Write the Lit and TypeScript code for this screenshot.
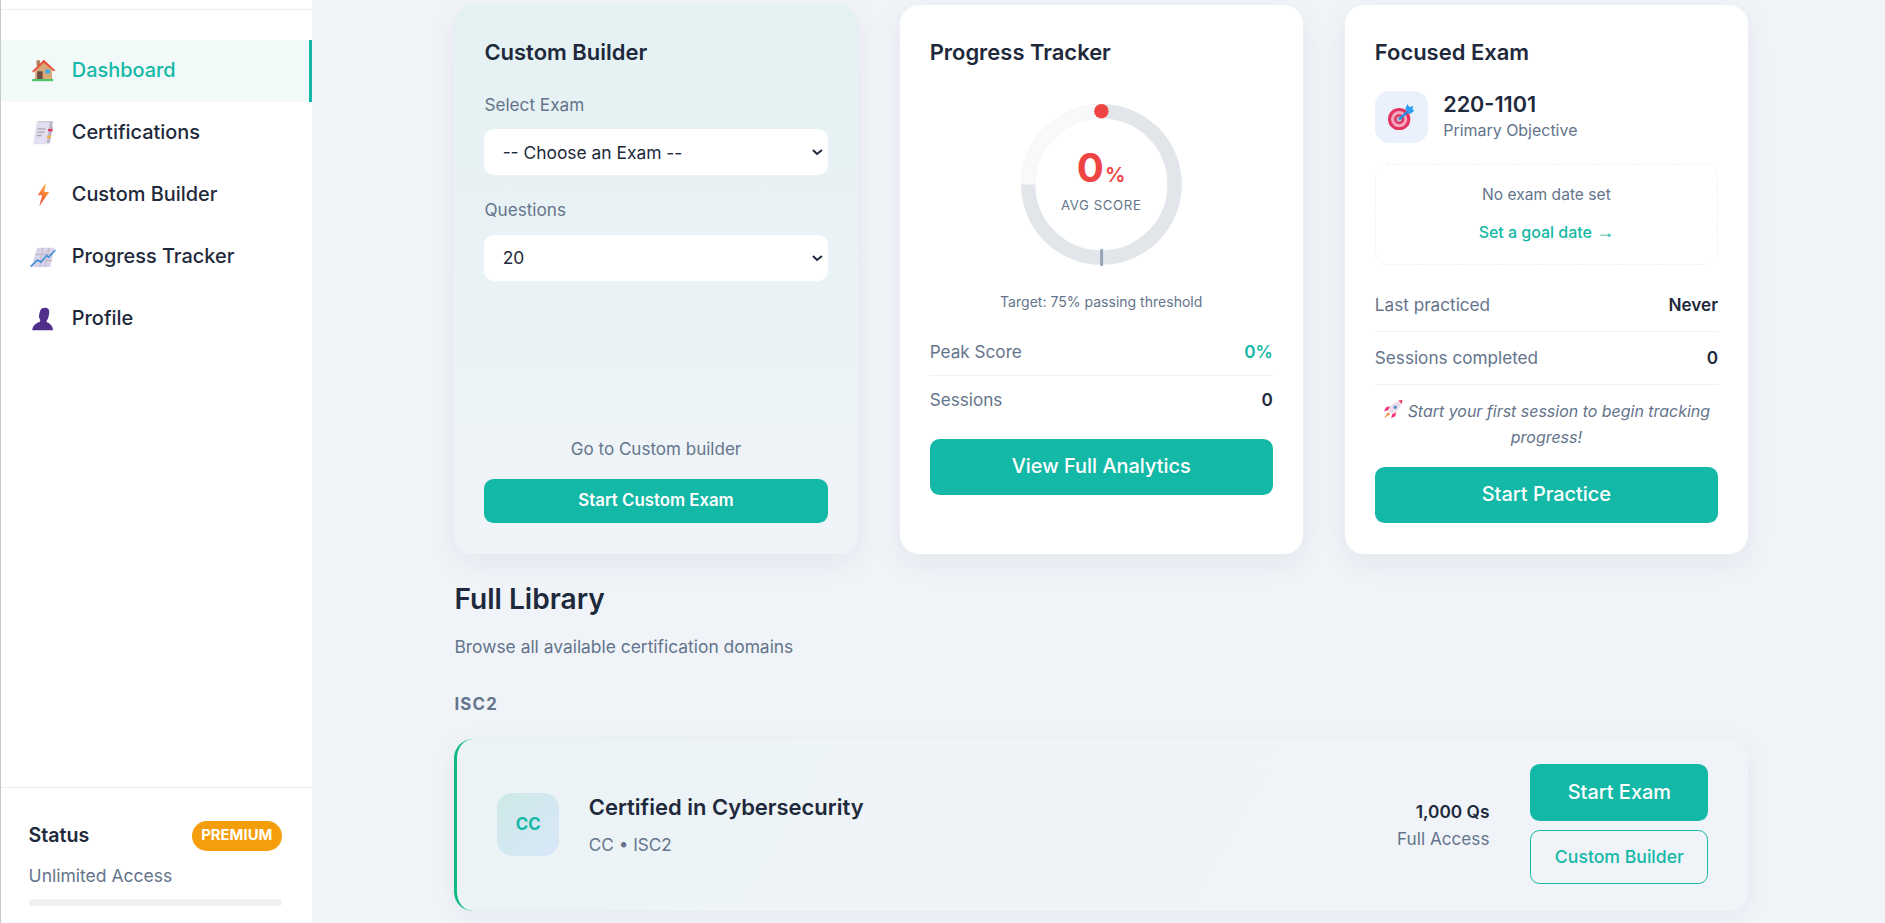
import { LitElement, html, css, svg } from "lit";
import { customElement } from "lit/decorators.js";

const icons = {
  house: svg`<svg class="ico" viewBox="0 0 24 24"><rect x="2" y="20" width="19" height="2" fill="#4cc46a"/><rect x="6" y="3" width="3" height="5" fill="#b07a52"/><path d="M5 11.5 12.5 4 20 11.5V20H4.500z" fill="#dba878"/><path d="M6.500 13h5v7h-5z" fill="#6d4c41"/><rect x="14" y="11.500" width="4" height="3.500" fill="#35aef0"/><path d="M2 13 12.500 2.500 23 12l-1.200 1.200-9.300-8-9.300 8.800z" fill="#e8503a"/></svg>`,
  doc: svg`<svg class="ico" viewBox="0 0 24 24"><path d="M7 2h14l-1 4 1 1-3 15H4z" fill="#bdb8c8"/><path d="M6 3h12l-3 20H3z" fill="#e3dff0"/><path d="M7 9h7M6.500 12h6.500M6 15h4.500" stroke="#aaa6b6" stroke-width="1.200"/><rect x="16.500" y="9" width="4" height="2.200" fill="#e0355f"/><rect x="15.500" y="15" width="3.500" height="2.200" fill="#f0b63c"/></svg>`,
  bolt: svg`<svg class="ico" viewBox="0 0 24 24"><defs><linearGradient id="b" x1=".7" y1="0" x2=".3" y2="1"><stop offset="0" stop-color="#fdb03c"/><stop offset="1" stop-color="#ef4d3e"/></linearGradient></defs><path d="M14.500 1.500 7 13h4L8.500 23 17.500 10H13z" fill="url(#b)"/></svg>`,
  chart: svg`<svg class="ico" viewBox="0 0 24 24"><path d="M6.500 3.500H22L18.500 21H1.500z" fill="#d8d3e6"/><path d="M11.500 3.500 9 21M17 3.500 14 21M5 9.500h16M3.500 15h16.500" stroke="#b8b2ca" stroke-width=".8"/><path d="M.5 20.500 7 14.500l3 2 5-6 2 1.500 6-6.500" fill="none" stroke="#3e92dc" stroke-width="1.500"/></svg>`,
  person: svg`<svg class="ico" viewBox="0 0 24 24"><path d="M11 2c4-1.500 7 .5 6.500 4-.2 2-.5 4-1.500 6-.5 1-1 1.500-1 2.500 3.500 1 5.500 3.500 6 7.500H2c.5-4 3-6.500 6.500-7.500 1-.3 1-1.500.5-2.500-1-1.500-1-3-.5-5C9 5 9.500 2.800 11 2z" fill="#4f2e8c"/></svg>`,
  target: svg`<svg class="tgt" viewBox="0 0 26 26"><circle cx="11" cy="15" r="11" fill="#e5325f"/><circle cx="11" cy="15" r="8" fill="#f3a6c0"/><circle cx="11" cy="15" r="5" fill="#e5325f"/><circle cx="11" cy="15" r="2.600" fill="#b9b5c6"/><path d="M11 15 20 7" stroke="#1f8fe0" stroke-width="2.400"/><path d="M17 5l2-5 2 3 4-1-1 3 2 2-5 3z" fill="#2d9ff0"/></svg>`,
  rocket: svg`<svg class="rkt" viewBox="0 0 20 20"><path d="M5 11C8 5 13 2 19 1c-1 6-4 11-10 14z" fill="#ebdde8"/><path d="M15 1.500 19 1l-.5 4z" fill="#ef3e64"/><circle cx="12" cy="8" r="1.700" fill="#5f8fd8"/><path d="M5 11 1 12l2-4 4-1zM9 15l-1 4 4-2 1-4z" fill="#f3367a"/><path d="M5 13l2 2-6 4z" fill="#f58a3c"/></svg>`,
};

@customElement("app-root")
export class AppRoot extends LitElement {
  static styles = css`
    :host {
      display: flex;
      zoom: 1.2;
      width: 1570.8px;
      height: 769.1px;
      overflow: hidden;
      background: #f0f4f9;
      color: #1e293b;
      font-family: Inter, "Liberation Sans", sans-serif;
      font-size: 14.3px;
      line-height: 1.5;
    }
    * { box-sizing: border-box; }

    .side {
      width: 260px;
      flex: none;
      background: #fff;
      border-left: 1px solid #c9c9c9;
      display: flex;
      flex-direction: column;
    }
    .top-rule { height: 8px; border-bottom: 1px solid #eceef1; }
    .nav { display: flex; flex-direction: column; margin-top: 25px; flex: 1; }
    .nav-item {
      display: flex;
      align-items: center;
      gap: 13px;
      height: 51.7px;
      padding-left: 24px;
      font-size: 16.6px;
      font-weight: 450;
      color: #1e293b;
    }
    .nav-item.active {
      background: #f1faf8;
      color: #14b8a6;
      border-right: 2.5px solid #14b8a6;
    }
    .ico { width: 22px; height: 22px; flex: none; }

    .status { border-top: 1px solid #eceef1; padding: 27px 25px 15px 23px; height: 113px; }
    .status-head { display: flex; align-items: center; justify-content: space-between; }
    .status-name { font-size: 16.3px; font-weight: 600; }
    .badge {
      background: #f59e0b;
      color: #fff;
      font-size: 12.4px;
      font-weight: 700;
      padding: 3.500px 8px;
      border-radius: 999px;
      line-height: 18px;
    }
    .status-sub { color: #64748b; font-size: 14.6px; margin-top: 10px; }
    .bar { height: 6px; border-radius: 3px; background: #eef0f2; margin-top: 8px; }

    .main { flex: 1; padding: 4px 0 0 118.700px; min-width: 0; }
    .wrap { width: 1078px; }
    .grid {
      display: grid;
      grid-template-columns: repeat(3, 336px);
      column-gap: 35px;
      height: 456px;
    }
    .card {
      background: #fff;
      border-radius: 16px;
      padding: 26px 25px 26px;
      box-shadow: 0 8px 24px rgba(30, 41, 59, 0.06);
      display: flex;
      flex-direction: column;
    }
    .card.tint { background: linear-gradient(180deg, #e4f1f2 0%, #f0f4f9 100%); }
    h3 { margin: 0 0 19.500px; font-size: 18.3px; font-weight: 600; line-height: 27px; }
    .lbl { color: #64748b; font-size: 14.300px; line-height: 21px; margin-bottom: 10px; }
    select {
      width: 100%;
      height: 38.500px;
      border: 1px solid #fff;
      border-radius: 8px;
      background: #fff;
      color: #1e293b;
      font: 400 14.500px Inter, sans-serif;
      padding: 0 11px;
      margin-bottom: 18.500px;
    }
    .go { margin-top: auto; text-align: center; color: #64748b; font-size: 14.200px; line-height: 21px; margin-bottom: 15px; }
    .btn {
      display: flex;
      align-items: center;
      justify-content: center;
      background: #14b8a6;
      color: #fff;
      border-radius: 8px;
      font-size: 16.600px;
      font-weight: 550;
      height: 47px;
    }
    .btn.small { height: 36.500px; font-size: 14px; font-weight: 600; }
    .btn.focus-btn { height: 46.500px; }

    .ring {
      position: relative;
      align-self: center;
      width: 134px;
      height: 134px;
      margin-top: 10px;
      flex: none;
    }
    .ring svg { display: block; overflow: visible; }
    .ring-text {
      position: absolute;
      inset: 0;
      display: flex;
      flex-direction: column;
      align-items: center;
      justify-content: center;
      padding-bottom: 4px;
    }
    .pct { color: #ef4444; font-size: 33.500px; font-weight: 700; line-height: 34px; }
    .pct span { font-size: 17px; font-weight: 600; margin-left: 1px; }
    .avg { font-size: 11px; color: #64748b; letter-spacing: 0.5px; line-height: 16px; }
    .target { text-align: center; font-size: 11.700px; color: #64748b; margin-top: 22px; line-height: 18px; margin-bottom: 13px; }
    .row {
      display: flex;
      justify-content: space-between;
      align-items: center;
      height: 40px;
      color: #64748b;
      border-bottom: 1px solid #f0f2f5;
    }
    .row b { color: #1e293b; font-weight: 600; }
    .row b.teal { color: #14b8a6; }
    .row.last { border-bottom: 0; }
    .mt { margin-top: 12px; }

    .focus-head { display: flex; align-items: center; gap: 13px; margin-top: -1px; }
    .focus-ico {
      width: 44px;
      height: 44px;
      background: #eaf1fd;
      border-radius: 12px;
      display: flex;
      align-items: center;
      justify-content: center;
    }
    .tgt { width: 22px; height: 22px; }
    .code { font-size: 18px; font-weight: 600; line-height: 22px; margin-bottom: 1px; }
    .obj { color: #64748b; font-size: 13.300px; line-height: 21px; }
    .date {
      margin-top: 17px;
      border: 1px dashed #f0f2f5;
      border-radius: 10px;
      height: 84px;
      text-align: center;
      padding-top: 14px;
    }
    .date div { color: #64748b; font-size: 13px; line-height: 21px; }
    .date a { display: block; margin-top: 11px; color: #14b8a6; font-size: 13.300px; font-weight: 500; line-height: 21px; }
    .arrow { font-family: "Liberation Sans", sans-serif; font-size: 15px; font-weight: 400; }
    .rows { margin-top: 12px; }
    .rows .row { height: 44px; }
    .note {
      text-align: center;
      font-style: italic;
      color: #64748b;
      font-size: 13.300px;
      line-height: 22px;
      margin-top: 12px;
      margin-bottom: 12.500px;
    }
    .rkt { width: 17px; height: 17px; vertical-align: -2px; }

    h2 { margin: 22px 0 0; font-size: 23.400px; font-weight: 600; line-height: 36px; }
    .browse { color: #64748b; font-size: 14.500px; line-height: 22px; margin-top: 10px; }
    .group { color: #64748b; font-size: 14px; font-weight: 700; letter-spacing: 1px; line-height: 21px; margin-top: 27px; }
    .exam {
      margin-top: 18px;
      height: 143px;
      border-left: 2.500px solid #10b981;
      border-radius: 16px;
      background: linear-gradient(120deg, #ebf3f5 0%, #f0f4f9 60%);
      box-shadow: 0 4px 20px rgba(30, 41, 59, 0.05);
      display: flex;
      align-items: center;
      padding: 0 33px 0 33px;
    }
    .abbr {
      width: 52px;
      height: 53px;
      border-radius: 13px;
      background: linear-gradient(135deg, #cde9e7, #d9e7f9);
      color: #14b8a6;
      font-weight: 700;
      font-size: 14px;
      display: flex;
      align-items: center;
      justify-content: center;
      flex: none;
      margin-bottom: 1px;
    }
    .exam-main { margin-left: 24.500px; flex: 1; padding-bottom: 1px; }
    .exam-title { font-size: 18.300px; font-weight: 600; line-height: 27px; }
    .exam-sub { color: #64748b; font-size: 14.300px; line-height: 21px; margin-top: 7px; }
    .exam-q { text-align: right; margin-right: 34px; }
    .exam-q b { display: block; font-size: 14.400px; font-weight: 600; line-height: 22px; }
    .exam-q span { display: block; color: #64748b; font-size: 14.300px; line-height: 21px; margin-top: 1px; }
    .acts { width: 148.500px; display: flex; flex-direction: column; gap: 8px; margin-bottom: 1px; }
    .btn.outline {
      background: transparent;
      color: #14b8a6;
      border: 1px solid #14b8a6;
      font-size: 14.700px;
      height: 45px;
    }
  `;

  private nav(icon: unknown, label: string, active = false) {
    return html`<div class="nav-item ${active ? "active" : ""}">${icon}<span>${label}</span></div>`;
  }

  render() {
    return html`
      <aside class="side">
        <div class="top-rule"></div>
        <nav class="nav">
          ${this.nav(icons.house, "Dashboard", true)}
          ${this.nav(icons.doc, "Certifications")}
          ${this.nav(icons.bolt, "Custom Builder")}
          ${this.nav(icons.chart, "Progress Tracker")}
          ${this.nav(icons.person, "Profile")}
        </nav>
        <div class="status">
          <div class="status-head">
            <span class="status-name">Status</span><span class="badge">PREMIUM</span>
          </div>
          <div class="status-sub">Unlimited Access</div>
          <div class="bar"></div>
        </div>
      </aside>
      <main class="main">
        <div class="wrap">
          <section class="grid">
            <div class="card tint">
              <h3>Custom Builder</h3>
              <div class="lbl">Select Exam</div>
              <select><option>-- Choose an Exam --</option></select>
              <div class="lbl">Questions</div>
              <select><option>20</option></select>
              <div class="go">Go to Custom builder</div>
              <div class="btn small">Start Custom Exam</div>
            </div>
            <div class="card">
              <h3>Progress Tracker</h3>
              <div class="ring">
                <svg width="134" height="134" viewBox="0 0 134 134">
                  <circle cx="67" cy="67" r="61" fill="none" stroke="#e2e6eb" stroke-width="12"/>
                  <path d="M6 67A61 61 0 0 1 67 6" fill="none" stroke="#f7f9fb" stroke-width="12"/>
                  <rect x="66" y="121" width="2.400" height="14" fill="#94a3b8"/>
                  <circle cx="67" cy="6" r="6" fill="#ef4444"/>
                </svg>
                <div class="ring-text">
                  <div class="pct">0<span>%</span></div>
                  <div class="avg">AVG SCORE</div>
                </div>
              </div>
              <div class="target">Target: 75% passing threshold</div>
              <div class="row"><span>Peak Score</span><b class="teal">0%</b></div>
              <div class="row last"><span>Sessions</span><b>0</b></div>
              <div class="btn mt">View Full Analytics</div>
            </div>
            <div class="card">
              <h3>Focused Exam</h3>
              <div class="focus-head">
                <div class="focus-ico">${icons.target}</div>
                <div>
                  <div class="code">220-1101</div>
                  <div class="obj">Primary Objective</div>
                </div>
              </div>
              <div class="date">
                <div>No exam date set</div>
                <a>Set a goal date <span class="arrow">→</span></a>
              </div>
              <div class="rows">
                <div class="row"><span>Last practiced</span><b>Never</b></div>
                <div class="row"><span>Sessions completed</span><b>0</b></div>
              </div>
              <div class="note">${icons.rocket} Start your first session to begin tracking progress!</div>
              <div class="btn focus-btn">Start Practice</div>
            </div>
          </section>
          <h2>Full Library</h2>
          <div class="browse">Browse all available certification domains</div>
          <div class="group">ISC2</div>
          <div class="exam">
            <div class="abbr">CC</div>
            <div class="exam-main">
              <div class="exam-title">Certified in Cybersecurity</div>
              <div class="exam-sub">CC • ISC2</div>
            </div>
            <div class="exam-q"><b>1,000 Qs</b><span>Full Access</span></div>
            <div class="acts">
              <div class="btn">Start Exam</div>
              <div class="btn outline">Custom Builder</div>
            </div>
          </div>
        </div>
      </main>
    `;
  }
}
